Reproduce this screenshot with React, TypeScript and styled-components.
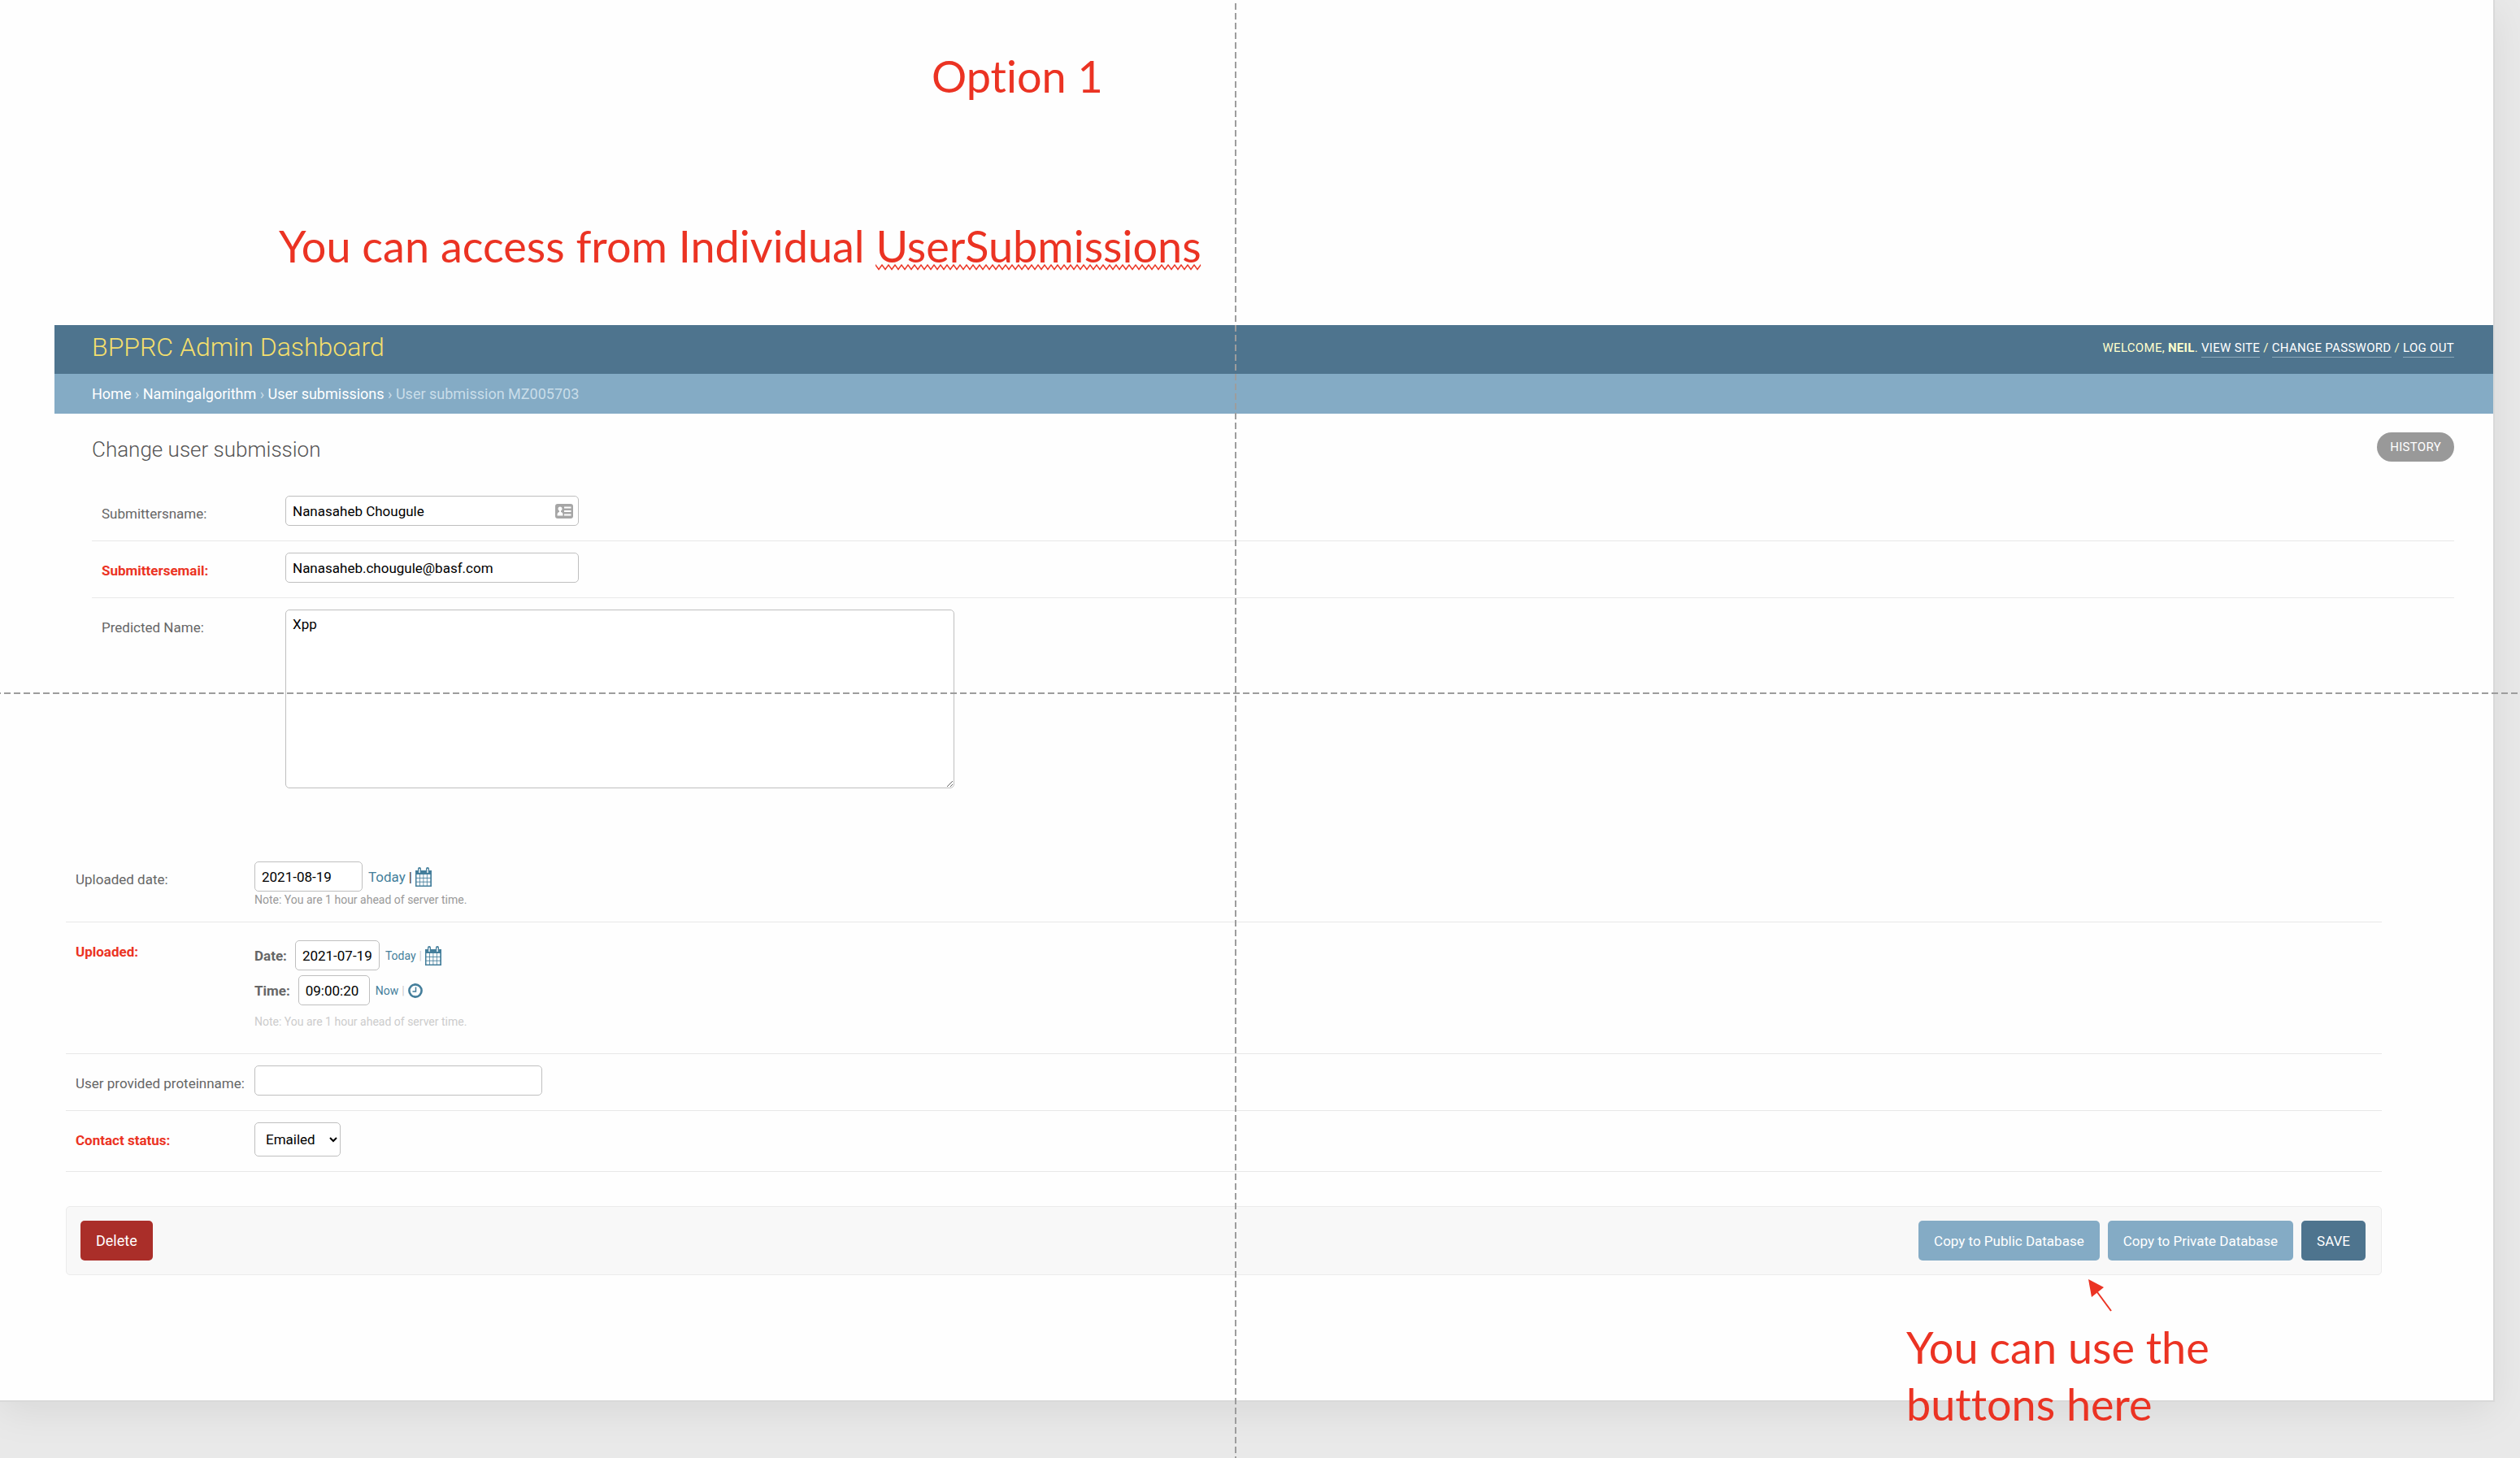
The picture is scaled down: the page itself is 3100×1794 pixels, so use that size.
import React from "react";
import styled, { createGlobalStyle, css } from "styled-components";

const GlobalStyle = createGlobalStyle`
  *, *::before, *::after { box-sizing: border-box; }
  html, body, #root { height: 100%; margin: 0; }
  body {
    background: #e9e9e9;
    font-family: Roboto, "Liberation Sans", sans-serif;
    font-size: 17px;
    color: #333;
  }
`;

const Workspace = styled.div`
  position: relative;
  min-height: 100%;
  padding: 0 33px 72px 0;
  overflow: hidden;
`;

const Slide = styled.main`
  min-height: calc(100vh - 72px);
  padding-left: 67px;
  padding-bottom: 154px;
  background: #fefefe;
  box-shadow: 0 0 0 2px #d9d9d9, 0 12px 48px rgba(0, 0, 0, 0.08);
`;

const noteText = css`
  margin: 0;
  font-family: Lato, "Open Sans", sans-serif;
  font-size: 54px;
  line-height: 70px;
  font-weight: 400;
  font-variant-ligatures: none;
  color: #eb3323;
`;

const SlideTitles = styled.header`
  display: flex;
  flex-direction: column;
  gap: 139px;
  padding: 59px 0 62px;
`;

const SlideTitle = styled.h1`
  ${noteText}
  padding-left: 1079px;
`;

const SlideSubtitle = styled.p`
  ${noteText}
  padding-left: 276px;
`;

const Misspelled = styled.span`
  position: relative;
  display: inline-block;
`;

const Squiggle = styled.svg`
  position: absolute;
  left: 0;
  bottom: 5px;
  width: 100%;
  height: 8px;
`;

const SiteHeader = styled.header`
  display: flex;
  justify-content: space-between;
  align-items: center;
  height: 60px;
  padding: 0 48px 4px 46px;
  background: #4e748e;
  color: #ffffcc;
`;

const SiteName = styled.a`
  padding-bottom: 2px;
  font-size: 32px;
  font-weight: 300;
  color: #f4df6c;
  text-decoration: none;
`;

const UserTools = styled.nav`
  font-size: 15px;
  letter-spacing: 0.02em;
  text-transform: uppercase;
`;

const ToolLink = styled.a`
  padding-bottom: 2px;
  border-bottom: 1px solid #8ca8ba;
  color: #fff;
  text-decoration: none;
`;

const Breadcrumbs = styled.nav`
  height: 49px;
  padding: 0 48px 0 46px;
  background: #84abc5;
  color: #c9dde9;
  font-size: 18px;
  line-height: 50px;
`;

const Crumb = styled.a`
  color: #fff;
  text-decoration: none;
`;

const Content = styled.section`
  padding: 0 48px 0 46px;
`;

const ContentHead = styled.div`
  display: flex;
  justify-content: space-between;
  align-items: center;
  height: 87px;
`;

const PageTitle = styled.h2`
  margin: 0;
  font-size: 26px;
  font-weight: 300;
  color: #555;
`;

const HistoryButton = styled.button`
  height: 36px;
  margin-bottom: 6px;
  padding: 0 16px;
  border: 0;
  border-radius: 18px;
  background: #999;
  color: #fff;
  font: 15px Roboto, sans-serif;
  letter-spacing: 0.02em;
  text-transform: uppercase;
`;

const Row = styled.div<{ $label: number; $last?: boolean }>`
  display: grid;
  grid-template-columns: ${(p) => p.$label}px 1fr;
  align-items: start;
  padding: 14px 0 18px 12px;
  border-bottom: ${(p) => (p.$last ? "0" : "1px solid #e8e8e8")};
`;

const labelStyle = css<{ $required?: boolean }>`
  margin: 0;
  padding-top: 12px;
  line-height: 20px;
  font-size: 17px;
  font-weight: ${(p) => (p.$required ? 700 : 400)};
  color: ${(p) => (p.$required ? "#eb3323" : "#666")};
  white-space: nowrap;
`;

const Label = styled.label<{ $required?: boolean }>`
  ${labelStyle}
`;

const GroupLabel = styled.span<{ $required?: boolean }>`
  ${labelStyle}
`;

const FieldWrap = styled.div<{ $width: number }>`
  position: relative;
  display: flex;
  width: ${(p) => p.$width}px;
`;

const fieldStyle = css`
  border: 1px solid #bfbfbf;
  border-radius: 5px;
  background: #fff;
  color: #000;
  font: 17px Roboto, "Liberation Sans", sans-serif;
`;

const TextInput = styled.input`
  ${fieldStyle}
  width: 100%;
  height: 37px;
  padding: 0 8px;
`;

const TextArea = styled.textarea`
  ${fieldStyle}
  display: block;
  width: 823px;
  height: 220px;
  padding: 7px 8px;
`;

const StatusSelect = styled.select`
  ${fieldStyle}
  width: 106px;
  height: 42px;
  padding: 0 5px 0 9px;
`;

const CardBadge = styled.svg`
  position: absolute;
  right: 7px;
  top: 10px;
  width: 22px;
  height: 18px;
`;

const LowerForm = styled.section`
  padding: 58px 137px 0 14px;
`;

const Line = styled.div`
  display: flex;
  align-items: center;
  gap: 7px;
`;

const Stack = styled.div`
  display: flex;
  flex-direction: column;
  gap: 6px;
  padding-top: 8px;
`;

const PartLabel = styled.label`
  margin-right: 3px;
  font-weight: 700;
  color: #666;
`;

const Shortcuts = styled.span<{ $small?: boolean }>`
  display: flex;
  align-items: center;
  gap: 4px;
  font-size: ${(p) => (p.$small ? 14 : 17)}px;
  color: ${(p) => (p.$small ? "#ccc" : "#333")};
`;

const Shortcut = styled.a`
  display: flex;
  color: #447e9b;
  text-decoration: none;
`;

const Note = styled.p<{ $faded?: boolean }>`
  margin: ${(p) => (p.$faded ? "4px 0 12px" : "0")};
  padding-top: 2px;
  font-size: 14px;
  line-height: 17px;
  color: ${(p) => (p.$faded ? "#ccc" : "#999")};
`;

const SubmitRow = styled.div`
  display: flex;
  align-items: center;
  gap: 10px;
  margin-top: 42px;
  padding: 17px 19px 17px 17px;
  border: 1px solid #ebebeb;
  border-radius: 5px;
  background: #f8f8f8;
`;

const Button = styled.button<{ $tone: string; $large?: boolean }>`
  height: 49px;
  padding: 0 19px;
  border: 0;
  border-radius: 5px;
  background: ${(p) => p.$tone};
  color: #fff;
  font: ${(p) => (p.$large ? 18 : 17)}px Roboto, sans-serif;
`;

const Spacer = styled.span`
  flex: 1;
`;

const Callout = styled.aside`
  ${noteText}
  position: absolute;
  right: 345px;
  bottom: 32px;
  width: 410px;
`;

const Arrow = styled.svg`
  position: absolute;
  right: 500px;
  bottom: 180px;
  width: 32px;
  height: 42px;
`;

const Guide = styled.div<{ $vertical?: boolean }>`
  position: absolute;
  pointer-events: none;
  ${(p) =>
    p.$vertical
      ? css`
          top: 0;
          bottom: 0;
          left: calc(50% - 31px);
          width: 2px;
          background: repeating-linear-gradient(to bottom, transparent 0 4px, #9d9d9d 4px 12px);
        `
      : css`
          left: 0;
          right: 0;
          top: 852px;
          height: 2px;
          background: repeating-linear-gradient(to right, #9d9d9d 0 1px, transparent 1px 5px, #9d9d9d 5px 12px);
        `}
`;

const CalendarIcon = () => (
  <svg width="20" height="24" viewBox="0 0 20 24" aria-hidden="true">
    <path fill="#447e9b" d="M0 4h20v20H0z" />
    <path fill="#447e9b" d="M3 2a2 2 0 0 1 4 0v4H3zM13 2a2 2 0 0 1 4 0v4h-4z" />
    <path fill="#fff" d="M4.300 2h1.400v5H4.300zM14.300 2h1.400v5h-1.400z" />
    {[0, 1, 2].map((r) =>
      [0, 1, 2, 3].map((c) => (
        <rect key={`${r}-${c}`} x={1.5 + c * 4.4} y={9 + r * 4.8} width="3.600" height="3.900" fill="#fff" />
      ))
    )}
  </svg>
);

const ClockIcon = () => (
  <svg width="18" height="20" viewBox="0 0 18 20" aria-hidden="true">
    <circle cx="9" cy="10" r="7.600" fill="none" stroke="#447e9b" strokeWidth="2.600" />
    <path d="M9.500 5.500v5.500H5.500" fill="none" stroke="#447e9b" strokeWidth="1.500" />
  </svg>
);

export default function App() {
  return (
    <>
      <GlobalStyle />
      <Workspace>
        <Slide>
          <SlideTitles>
            <SlideTitle>Option 1</SlideTitle>
            <SlideSubtitle>
              You can access from Individual{" "}
              <Misspelled>
                UserSubmissions
                <Squiggle aria-hidden="true">
                  <defs>
                    <pattern id="zigzag" width="8" height="8" patternUnits="userSpaceOnUse">
                      <path d="M-1 -0.500L0 1L4 6.500L8 1L9 -0.500" fill="none" stroke="#eb3323" strokeWidth="1.400" />
                    </pattern>
                  </defs>
                  <rect width="100%" height="8" fill="url(#zigzag)" />
                </Squiggle>
              </Misspelled>
            </SlideSubtitle>
          </SlideTitles>

          <SiteHeader>
            <SiteName href="#">BPPRC Admin Dashboard</SiteName>
            <UserTools>
              Welcome, <strong>Neil</strong>. <ToolLink href="#">View site</ToolLink> /{" "}
              <ToolLink href="#">Change password</ToolLink> / <ToolLink href="#">Log out</ToolLink>
            </UserTools>
          </SiteHeader>
          <Breadcrumbs>
            <Crumb href="#">Home</Crumb> › <Crumb href="#">Namingalgorithm</Crumb> ›{" "}
            <Crumb href="#">User submissions</Crumb> › User submission MZ005703
          </Breadcrumbs>

          <Content>
            <ContentHead>
              <PageTitle>Change user submission</PageTitle>
              <HistoryButton type="button">History</HistoryButton>
            </ContentHead>
            <Row $label={226}>
              <Label htmlFor="name">Submittersname:</Label>
              <FieldWrap $width={361}>
                <TextInput id="name" defaultValue="Nanasaheb Chougule" />
                <CardBadge viewBox="0 0 22 18" aria-hidden="true">
                  <rect width="22" height="18" rx="3" fill="#a6a6a6" />
                  <circle cx="6" cy="6" r="2.500" fill="#fff" />
                  <path fill="#fff" d="M5 7h2v3c2 .6 2.500 1.500 2.500 4.500h-7c0-3 .5-3.900 2.500-4.500zM11 3.500h8.500v2H11zM11 8h8.500v2H11zM11 12.500h8.500v2H11z" />
                </CardBadge>
              </FieldWrap>
            </Row>
            <Row $label={226}>
              <Label htmlFor="email" $required>Submittersemail:</Label>
              <FieldWrap $width={361}>
                <TextInput id="email" defaultValue="Nanasaheb.chougule@basf.com" />
              </FieldWrap>
            </Row>
            <Row $label={226} $last>
              <Label htmlFor="predicted">Predicted Name:</Label>
              <TextArea id="predicted" defaultValue="Xpp" />
            </Row>
          </Content>

          <LowerForm>
            <Row $label={220}>
              <Label htmlFor="uploaded-date">Uploaded date:</Label>
              <div>
                <Line>
                  <FieldWrap $width={133}>
                    <TextInput id="uploaded-date" defaultValue="2021-08-19" />
                  </FieldWrap>
                  <Shortcuts>
                    <Shortcut href="#">Today</Shortcut>|
                    <Shortcut href="#" aria-label="Open calendar"><CalendarIcon /></Shortcut>
                  </Shortcuts>
                </Line>
                <Note>Note: You are 1 hour ahead of server time.</Note>
              </div>
            </Row>
            <Row $label={220}>
              <GroupLabel $required>Uploaded:</GroupLabel>
              <Stack>
                <Line>
                  <PartLabel htmlFor="date">Date:</PartLabel>
                  <FieldWrap $width={104}>
                    <TextInput id="date" defaultValue="2021-07-19" />
                  </FieldWrap>
                  <Shortcuts $small>
                    <Shortcut href="#">Today</Shortcut>|
                    <Shortcut href="#" aria-label="Open calendar"><CalendarIcon /></Shortcut>
                  </Shortcuts>
                </Line>
                <Line>
                  <PartLabel htmlFor="time">Time:</PartLabel>
                  <FieldWrap $width={88}>
                    <TextInput id="time" defaultValue="09:00:20" />
                  </FieldWrap>
                  <Shortcuts $small>
                    <Shortcut href="#">Now</Shortcut>|
                    <Shortcut href="#" aria-label="Choose a time"><ClockIcon /></Shortcut>
                  </Shortcuts>
                </Line>
                <Note $faded>Note: You are 1 hour ahead of server time.</Note>
              </Stack>
            </Row>
            <Row $label={220}>
              <Label htmlFor="protein">User provided proteinname:</Label>
              <FieldWrap $width={354}>
                <TextInput id="protein" />
              </FieldWrap>
            </Row>
            <Row $label={220}>
              <Label htmlFor="status" $required>Contact status:</Label>
              <StatusSelect id="status" defaultValue="Emailed">
                <option>Emailed</option>
              </StatusSelect>
            </Row>
            <SubmitRow>
              <Button type="button" $tone="#aa2e29" $large>Delete</Button>
              <Spacer />
              <Button type="button" $tone="#84abc5">Copy to Public Database</Button>
              <Button type="button" $tone="#84abc5">Copy to Private Database</Button>
              <Button type="submit" $tone="#4e748e">SAVE</Button>
            </SubmitRow>
          </LowerForm>
        </Slide>

        <Arrow viewBox="0 0 32 42" aria-hidden="true">
          <path d="M12 17L29 40" stroke="#eb3323" strokeWidth="2" />
          <path d="M1 1L20 11L5 23z" fill="#eb3323" />
        </Arrow>
        <Callout>You can use the buttons here</Callout>
        <Guide />
        <Guide $vertical />
      </Workspace>
    </>
  );
}
